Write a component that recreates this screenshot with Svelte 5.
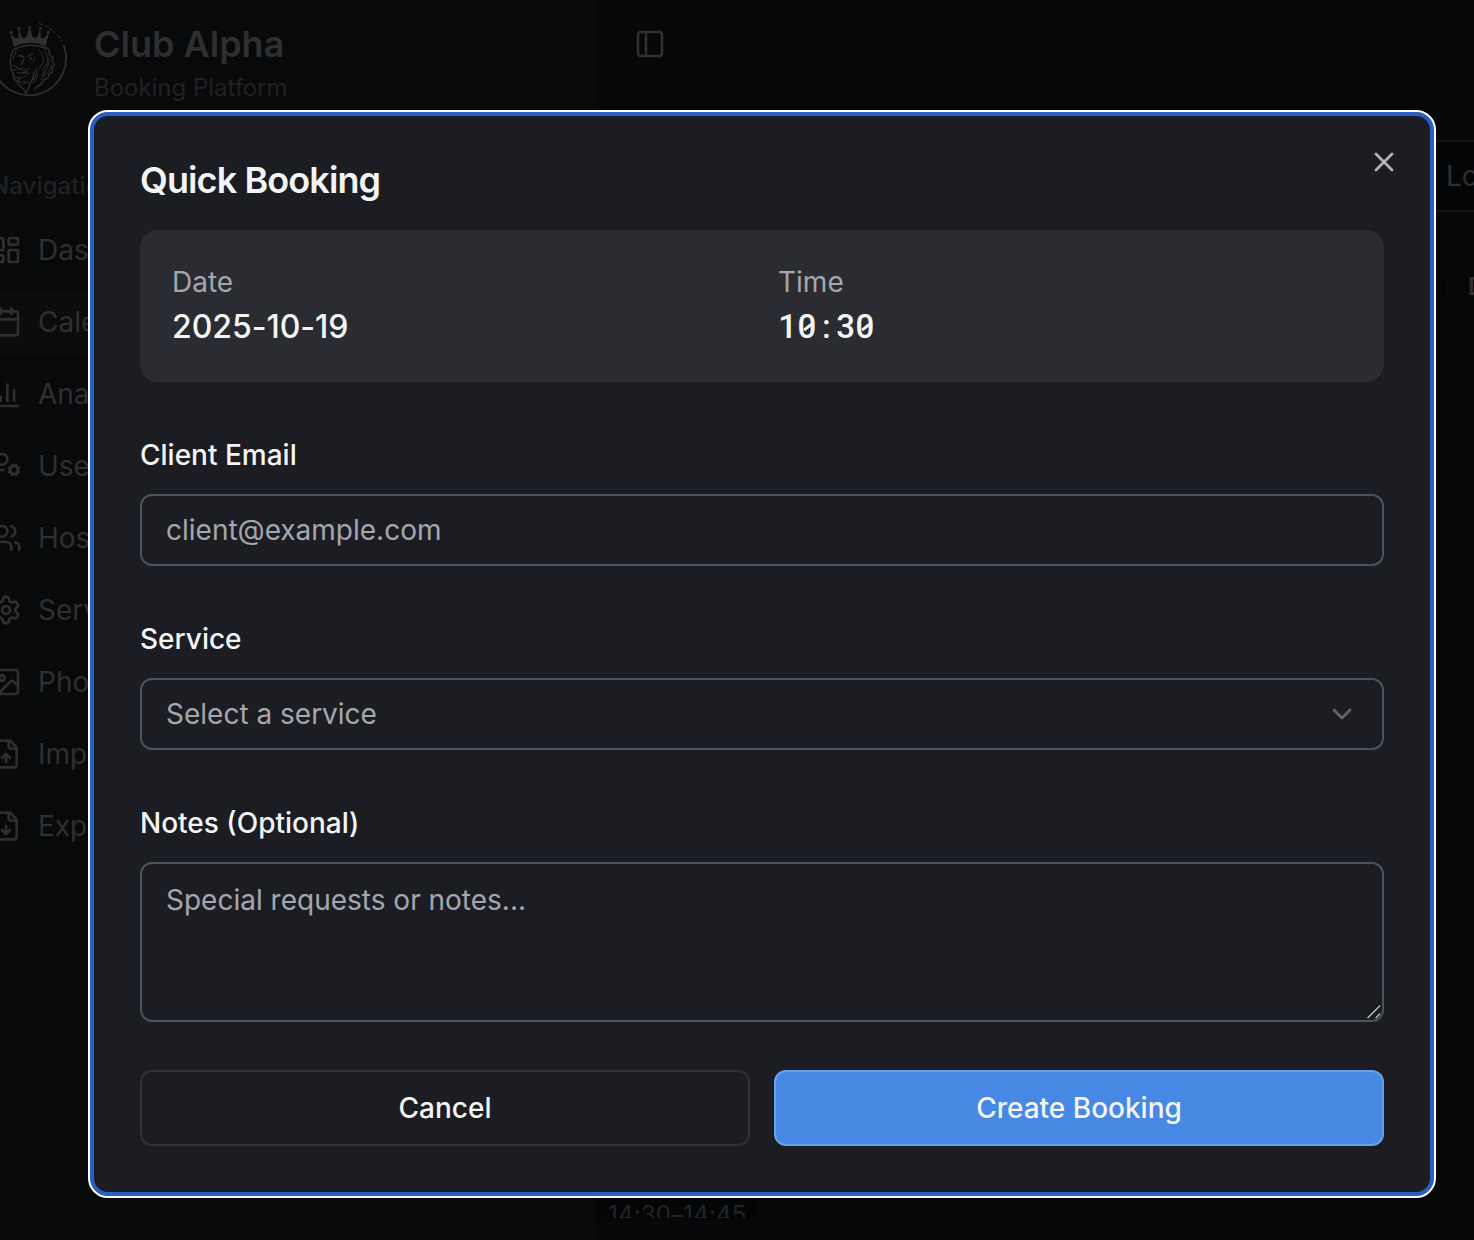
<script>
  const nav = [
    { label: 'Dashboard', paths: ['M4 3h5a1 1 0 0 1 1 1v7a1 1 0 0 1-1 1H4a1 1 0 0 1-1-1V4a1 1 0 0 1 1-1z', 'M15 3h5a1 1 0 0 1 1 1v3a1 1 0 0 1-1 1h-5a1 1 0 0 1-1-1V4a1 1 0 0 1 1-1z', 'M15 12h5a1 1 0 0 1 1 1v7a1 1 0 0 1-1 1h-5a1 1 0 0 1-1-1v-7a1 1 0 0 1 1-1z', 'M4 16h5a1 1 0 0 1 1 1v3a1 1 0 0 1-1 1H4a1 1 0 0 1-1-1v-3a1 1 0 0 1 1-1z'] },
    { label: 'Calendar', active: true, paths: ['M8 2v4', 'M16 2v4', 'M5 4h14a2 2 0 0 1 2 2v14a2 2 0 0 1-2 2H5a2 2 0 0 1-2-2V6a2 2 0 0 1 2-2z', 'M3 10h18'] },
    { label: 'Analytics', paths: ['M3 3v16a2 2 0 0 0 2 2h16', 'M18 17V9', 'M13 17V5', 'M8 17v-3'] },
    { label: 'Users', paths: ['M10 15H6a4 4 0 0 0-4 4v2', 'm14.305 16.53.923-.382', 'm15.228 13.852-.923-.383', 'm16.852 12.228-.383-.923', 'm16.852 17.772-.383.924', 'm19.148 12.228.383-.923', 'm19.53 18.696-.382-.924', 'm20.772 13.852.924-.383', 'm20.772 16.148.924.383', 'M15 15a3 3 0 1 0 6 0a3 3 0 1 0-6 0', 'M5 7a4 4 0 1 0 8 0a4 4 0 1 0-8 0'] },
    { label: 'Hosts', paths: ['M16 21v-2a4 4 0 0 0-4-4H6a4 4 0 0 0-4 4v2', 'M16 3.128a4 4 0 0 1 0 7.744', 'M22 21v-2a4 4 0 0 0-3-3.87', 'M5 7a4 4 0 1 0 8 0a4 4 0 1 0-8 0'] },
    { label: 'Services', paths: ['M9.671 4.136a2.34 2.34 0 0 1 4.659 0 2.34 2.34 0 0 0 3.319 1.915 2.34 2.34 0 0 1 2.33 4.033 2.34 2.34 0 0 0 0 3.831 2.34 2.34 0 0 1-2.33 4.033 2.34 2.34 0 0 0-3.319 1.915 2.34 2.34 0 0 1-4.659 0 2.34 2.34 0 0 0-3.32-1.915 2.34 2.34 0 0 1-2.33-4.033 2.34 2.34 0 0 0 0-3.831A2.34 2.34 0 0 1 6.35 6.051a2.34 2.34 0 0 0 3.319-1.915', 'M9 12a3 3 0 1 0 6 0a3 3 0 1 0-6 0'] },
    { label: 'Photos', paths: ['M5 3h14a2 2 0 0 1 2 2v14a2 2 0 0 1-2 2H5a2 2 0 0 1-2-2V5a2 2 0 0 1 2-2z', 'M7 9a2 2 0 1 0 4 0a2 2 0 1 0-4 0', 'm21 15-3.086-3.086a2 2 0 0 0-2.828 0L6 21'] },
    { label: 'Import', paths: ['M15 2H6a2 2 0 0 0-2 2v16a2 2 0 0 0 2 2h12a2 2 0 0 0 2-2V7z', 'M14 2v4a2 2 0 0 0 2 2h4', 'M12 12v6', 'm15 15-3-3-3 3'] },
    { label: 'Export', paths: ['M15 2H6a2 2 0 0 0-2 2v16a2 2 0 0 0 2 2h12a2 2 0 0 0 2-2V7z', 'M14 2v4a2 2 0 0 0 2 2h4', 'M12 18v-6', 'm9 15 3 3 3-3'] }
  ];
  const panel = ['M5 3h14a2 2 0 0 1 2 2v14a2 2 0 0 1-2 2H5a2 2 0 0 1-2-2V5a2 2 0 0 1 2-2z', 'M9 3v18'];
  const crownTips = [[19, 11.3], [27, 7.5], [37.7, 6.5], [48.3, 7.5], [56.3, 11.3]];
</script>

{#snippet icon(paths)}
  <svg class="icon" viewBox="0 0 24 24" aria-hidden="true">
    {#each paths as d}<path {d} />{/each}
  </svg>
{/snippet}

<div class="app">
  <aside class="sidebar">
    <header class="brand">
      <svg class="crest" viewBox="0 0 76 76" aria-hidden="true">
        <path class="ring" d="M71.600 24A37 37 0 1 1 2.500 50.500" />
        <path class="ring dashed" d="M47 2.500A37 37 0 0 1 71 23" />
        <path class="solid" d="M22 26 18.300 12l5 5.500 3-.5.500-10 3 9.500 4.500 0 3.200-10.500 3.300 10.500 4.500 0 2.900-9.500.6 10 3 .5 5-5.500-3.200 13.500Q38 18 22 26z" />
        {#each crownTips as [cx, cy]}<circle class="solid" {cx} {cy} r="1.600" />{/each}
        <path class="strong" d="M22 28.500Q38 20.500 54 27.500" />
        <path class="strong" d="M21.500 29Q19 33 18.200 40l1 8 2 5 .8 5 3.500 3 2 4 4 2.500 2.500 5 3-6 1.500-5 2.500-4 1-7M54 26l3.500 4-.5 3 4 4-1 3 2.500 4-2.500 3 .5 4-3.500 2-1 4-4 1.500-3 5-4 2-2.500 3" />
        <path class="strong" d="M26 35.500q3-2 6 1M36 35.500q2-2.500 5-2.500M37 37.500h3M24 45.500l3 2.500 4-1M24.500 51q5 3 11-1M32 38l-3 6" />
        <path d="M20.500 44l4 2M20 49l4-.5M30 49.500l8-2M31 51.500l7 1M22 55q6 5 13-1M25 60q5 3 8 0M27 57v4M30 64l4-3 3 1M47 29q6 6 4 13l-4 6M52 29q5 7 3 14l-5 7M57 37q1 8-7 17M60 44q-2 7-9 12M44 47q2 7-3 12M46 53q0 5-6 9M43 36l-2 5M24 30l-3 9M53 50l-4 9" />
      </svg>
      <div class="brand-text">
        <strong>Club Alpha</strong>
        <span>Booking Platform</span>
      </div>
    </header>
    <p class="group">Navigation</p>
    <nav>
      {#each nav as item}
        <div class="item" class:active={item.active}>
          {@render icon(item.paths)}
          <span>{item.label}</span>
        </div>
      {/each}
    </nav>
  </aside>

  <main class="main">
    <div class="topbar">{@render icon(panel)}</div>
    <div class="location"><span>Location</span></div>
    <div class="tools"><span class="chip">Day</span></div>
    <div class="slots"><div class="slot">14:30–14:45</div></div>
  </main>
</div>

<div class="overlay">
  <div class="dialog" role="dialog" aria-label="Quick Booking">
    <button class="close" aria-label="Close">{@render icon(['M18 6 6 18', 'm6 6 12 12'])}</button>
    <h2>Quick Booking</h2>
    <dl class="summary">
      <div><dt>Date</dt><dd class="date">2025-10-19</dd></div>
      <div><dt>Time</dt><dd class="time">{#each '10:30' as c}<span class:zero={c === '0'}>{c}</span>{/each}</dd></div>
    </dl>
    <div class="field">
      <div class="label">Client Email</div>
      <div class="control"><span>client@example.com</span></div>
    </div>
    <div class="field">
      <div class="label">Service</div>
      <div class="control"><span>Select a service</span>{@render icon(['m6 9 6 6 6-6'])}</div>
    </div>
    <div class="field">
      <div class="label">Notes (Optional)</div>
      <div class="control area">
        <span>Special requests or notes...</span>
        <svg class="grip" viewBox="0 0 16 16" aria-hidden="true">
          <path class="shade" d="M1 13 13 1M8.500 14l5-5" /><path d="M1.500 14 14 1.500M9.500 14l4.500-4.500" />
        </svg>
      </div>
    </div>
    <div class="actions">
      <button class="cancel">Cancel</button>
      <button class="create">Create Booking</button>
    </div>
  </div>
</div>

<style>
  :global(body) { background: #060709; overflow: hidden; }
  .app, .overlay { font-family: Inter, 'Liberation Sans', sans-serif; }
  .app { display: flex; width: 1474px; height: 1240px; overflow: hidden; color: #2f2f30; }
  .icon { width: 32px; height: 32px; flex: none; fill: none; stroke: currentColor; stroke-width: 2; stroke-linecap: round; stroke-linejoin: round; }

  .sidebar { width: 596px; flex: none; background: #08090b; }
  .brand { display: flex; gap: 26px; height: 136px; box-sizing: border-box; padding-top: 20px; border-bottom: 1px solid #090a0c; }
  .crest { width: 76px; height: 76px; flex: none; margin: 1px 0 0 -8px; fill: none; stroke: #303031; stroke-width: 1; }
  .crest .ring { stroke-width: 1.800; }
  .crest .dashed { stroke-width: 1.200; stroke-dasharray: 4 2 2 3; }
  .crest .solid { fill: #303031; stroke: none; }
  .crest .strong { stroke-width: 1.400; }
  .brand-text { display: flex; flex-direction: column; }
  .brand-text strong { font-size: 36px; line-height: 48px; font-weight: 600; letter-spacing: 0; }
  .brand-text span { font-size: 24px; line-height: 32px; margin-top: 4px; letter-spacing: -.03px; color: #202122; }
  .group { margin: 34px 0 0 -9px; font-size: 24px; line-height: 32px; font-weight: 500; letter-spacing: .1px; color: #202122; }
  nav { display: flex; flex-direction: column; gap: 8px; margin-top: 16px; }
  .item { display: flex; align-items: center; gap: 16px; height: 64px; margin-left: -26px; padding-left: 16px; font-size: 28px; }
  .item.active { background: #0b0c0e; }

  .main { flex: 1; min-width: 0; display: flex; flex-direction: column; background: #060709; }
  .topbar { padding: 28px 0 0 38px; height: 140px; box-sizing: border-box; }
  .location { height: 72px; box-sizing: border-box; border: solid #131416; border-width: 2px 0; padding-left: 850px; display: flex; align-items: center; font-size: 28px; background: #040506; }
  .tools { padding: 55px 0 0 851px; }
  .chip { display: block; box-sizing: border-box; width: 80px; height: 40px; border: 1px solid #0b0c0e; border-radius: 12px; padding-left: 20px; font-size: 24px; line-height: 37px; font-weight: 600; }
  .slots { margin-top: auto; padding: 0 0 22px 2px; }
  .slot { box-sizing: border-box; width: 159px; height: 22px; overflow: hidden; padding-left: 10px; background: #040506; color: #232425; font-size: 24px; line-height: 37px; letter-spacing: .2px; }

  .overlay { position: absolute; inset: 0; display: flex; padding: 110px 38px 42px 88px; box-sizing: border-box; }
  .dialog { position: relative; flex: 1; box-sizing: border-box; border: 2px solid #fff; border-radius: 20px; padding: 43px 50px 50px; background: #1c1d22; box-shadow: inset 0 0 0 4px #285fc7; color: #f3f4f5; }
  .close { position: absolute; top: 34px; right: 34px; display: flex; padding: 0; border: 0; background: none; color: #b5b6b9; }
  h2 { margin: 0; font-size: 36px; line-height: 50px; font-weight: 600; letter-spacing: -.9px; }
  .summary { display: grid; grid-template-columns: 1fr 1fr; gap: 32px; margin: 25px 0 0; height: 152px; box-sizing: border-box; padding: 32px; border-radius: 18px; background: #2b2c31; }
  dt { font-size: 28px; line-height: 40px; color: #a4a7ad; }
  dd { margin: 0; font-size: 32px; line-height: 48px; font-weight: 500; letter-spacing: -.05px; }
  .date { padding-top: 1px; }
  .time { display: flex; padding-top: 1px; font-family: Roboto, sans-serif; font-size: 33px; letter-spacing: 0; }
  .time span { position: relative; width: 19.300px; text-align: center; }
  .time .zero::after { content: ''; position: absolute; left: 5.500px; top: 23px; width: 8.500px; height: 2.500px; background: currentColor; transform: rotate(-38deg); }
  .field { margin-top: 53px; }
  .label { height: 40px; font-size: 28px; line-height: 40px; font-weight: 500; }
  .control { display: flex; align-items: center; justify-content: space-between; margin-top: 19px; height: 72px; box-sizing: border-box; border: 2px solid #4e525d; border-radius: 12px; padding: 0 24px; font-size: 28px; line-height: 40px; color: #a4a7ad; }
  .control .icon { color: #64656a; }
  .area { position: relative; height: 160px; align-items: flex-start; padding-top: 16px; }
  .grip { position: absolute; right: 0; bottom: 0; width: 16px; height: 16px; fill: none; stroke: #b8b9ba; stroke-width: 1.600; }
  .grip .shade { stroke: #08090b; stroke-width: 2; }
  .actions { display: grid; grid-template-columns: 1fr 1fr; gap: 24px; margin-top: 48px; }
  .actions button { height: 76px; box-sizing: border-box; border-radius: 12px; padding: 0; font: 500 28px Inter, sans-serif; color: #f3f4f5; }
  .cancel { border: 2px solid #313237; background: transparent; }
  .create { border: 2px solid #68a0ee; background: #4788e5; }
</style>
